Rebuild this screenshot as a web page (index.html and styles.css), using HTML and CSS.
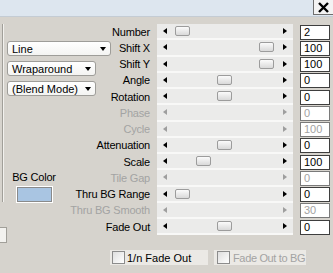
FILE: index.html
```html
<!DOCTYPE html>
<html lang="en">
<head>
    <meta charset="UTF-8">
    <title>Tile settings</title>
    <link rel="stylesheet" href="styles.css">
</head>
<body>
<div class="titlebar">
    <div class="close">
        <svg width="13" height="11" viewBox="0 0 13 11"><path d="M2 1 L11 10 M11 1 L2 10" stroke="#000" stroke-width="2.4" fill="none"/></svg>
    </div>
</div>

<div class="board">
    <!-- left column: mode drop downs and background colour -->
    <div class="side">
        <div class="pane">
            <div class="rule"></div>
            <div class="controls">
                <div class="combo wide"><span>Line</span><i class="caret"></i></div>
                <div class="combo"><span>Wraparound</span><i class="caret"></i></div>
                <div class="combo"><span>(Blend Mode)</span><i class="caret"></i></div>
                <div class="bgcolor">
                    <span>BG Color</span>
                    <div class="swatch"></div>
                </div>
            </div>
        </div>
        <div class="stub"></div>
    </div>

    <!-- slider rows -->
    <div class="rows">
        <div class="row">
            <label>Number</label>
            <div class="track"><i class="arr l"></i><b class="thumb" style="left: 18px"></b><i class="arr r"></i></div>
            <div class="val">2</div>
        </div>
        <div class="row">
            <label>Shift X</label>
            <div class="track"><i class="arr l"></i><b class="thumb" style="left: 102px"></b><i class="arr r"></i></div>
            <div class="val">100</div>
        </div>
        <div class="row">
            <label>Shift Y</label>
            <div class="track"><i class="arr l"></i><b class="thumb" style="left: 102px"></b><i class="arr r"></i></div>
            <div class="val">100</div>
        </div>
        <div class="row">
            <label>Angle</label>
            <div class="track"><i class="arr l"></i><b class="thumb" style="left: 60px"></b><i class="arr r"></i></div>
            <div class="val">0</div>
        </div>
        <div class="row">
            <label>Rotation</label>
            <div class="track"><i class="arr l"></i><b class="thumb" style="left: 60px"></b><i class="arr r"></i></div>
            <div class="val">0</div>
        </div>
        <div class="row off">
            <label>Phase</label>
            <div class="track"><i class="arr l"></i><i class="arr r"></i></div>
            <div class="val">0</div>
        </div>
        <div class="row off">
            <label>Cycle</label>
            <div class="track"><i class="arr l"></i><i class="arr r"></i></div>
            <div class="val">100</div>
        </div>
        <div class="row">
            <label>Attenuation</label>
            <div class="track"><i class="arr l"></i><b class="thumb" style="left: 60px"></b><i class="arr r"></i></div>
            <div class="val">0</div>
        </div>
        <div class="row">
            <label>Scale</label>
            <div class="track"><i class="arr l"></i><b class="thumb" style="left: 39px"></b><i class="arr r"></i></div>
            <div class="val">100</div>
        </div>
        <div class="row off">
            <label>Tile Gap</label>
            <div class="track"><i class="arr l"></i><i class="arr r"></i></div>
            <div class="val">0</div>
        </div>
        <div class="row">
            <label>Thru BG Range</label>
            <div class="track"><i class="arr l"></i><b class="thumb" style="left: 18px"></b><i class="arr r"></i></div>
            <div class="val">0</div>
        </div>
        <div class="row off">
            <label>Thru BG Smooth</label>
            <div class="track"><i class="arr l"></i><i class="arr r"></i></div>
            <div class="val">30</div>
        </div>
        <div class="row">
            <label>Fade Out</label>
            <div class="track"><i class="arr l"></i><b class="thumb" style="left: 60px"></b><i class="arr r"></i></div>
            <div class="val">0</div>
        </div>
    </div>
</div>

<div class="checks">
    <div class="check first"><i class="box"></i><span>1/n Fade Out</span></div>
    <div class="check second off"><i class="box"></i><span>Fade Out to BG</span></div>
</div>
</body>
</html>
```

FILE: styles.css
```css
body {
    margin: 0;
    background-color: #d6d3cd;
    font-family: "Liberation Sans", Arial, sans-serif;
    font-size: 11px;
    letter-spacing: -0.2px;
    color: #000;
}

.titlebar {
    height: 16px;
    background-color: #dde6ef;
    border-bottom: 1px solid #c4ccd4;
    display: flex;
    justify-content: flex-end;
}

.close {
    width: 19px;
    height: 14px;
    background-color: #f3f3f3;
    border-left: 1px solid #6f6f6f;
    border-bottom: 1px solid #6f6f6f;
    display: flex;
    align-items: center;
    justify-content: center;
}

.board {
    display: grid;
    padding-top: 7px;
}

.side,
.rows {
    grid-area: 1 / 1;
}

/* left column */
.side {
    display: flex;
    flex-direction: column;
}

.pane {
    display: flex;
    height: 178px;
}

.rule {
    margin-left: 2px;
    width: 1px;
    background-color: #a19f99;
    border-right: 1px solid #f2f1ee;
}

.controls {
    padding-left: 3px;
    padding-top: 17px;
    display: flex;
    flex-direction: column;
    align-items: flex-start;
    gap: 5px;
}

.combo {
    width: 89px;
    height: 20px;
    box-sizing: border-box;
    border: 1px solid #9e9d99;
    border-radius: 3px;
    background: linear-gradient(#ffffff, #f4f4f2);
    display: flex;
    align-items: center;
    justify-content: space-between;
    padding: 0 4px 0 4px;
    font-size: 11px;
    letter-spacing: 0;
}

.combo.wide {
    width: 104px;
}

.caret {
    width: 0;
    height: 0;
    border-left: 3.5px solid transparent;
    border-right: 3.5px solid transparent;
    border-top: 4px solid #000;
    margin-top: 1px;
}

.bgcolor {
    margin-top: 70px;
    margin-left: 2px;
    width: 50px;
    display: flex;
    flex-direction: column;
    align-items: center;
    gap: 3px;
    line-height: 13px;
}

.swatch {
    width: 33px;
    height: 13px;
    background-color: #a9c5e2;
    border: 1px solid #8a8a8a;
    box-shadow: 0 0 0 1px #ffffff;
}

.stub {
    margin-top: 25px;
    width: 6px;
    height: 14px;
    background-color: #f3f2ef;
    border: 1px solid #a19f99;
    border-left: none;
}

/* slider rows */
.rows {
    display: flex;
    flex-direction: column;
}

.row {
    height: 16.25px;
    display: grid;
    grid-template-columns: 150px 136px 30px;
    column-gap: 7px;
    align-items: center;
}

.row label {
    text-align: right;
    white-space: nowrap;
    line-height: 13px;
}

.track {
    position: relative;
    height: 100%;
    box-sizing: border-box;
    background-color: #ebebea;
    border-bottom: 2px solid #f8f8f7;
    display: flex;
    align-items: center;
    justify-content: space-between;
    padding: 0 6px 0 6px;
}

.arr {
    width: 0;
    height: 0;
    border-top: 3px solid transparent;
    border-bottom: 3px solid transparent;
}

.arr.l {
    border-right: 4px solid #000;
}

.arr.r {
    border-left: 4px solid #000;
}

.thumb {
    position: absolute;
    top: 2px;
    width: 15px;
    height: 10px;
    box-sizing: border-box;
    border: 1px solid #9c9c9c;
    border-radius: 2px;
    background: linear-gradient(#fbfbfb, #d9d9d9);
}

.val {
    height: 15px;
    box-sizing: border-box;
    border: 1px solid #3e3e3e;
    background-color: #fff;
    padding-left: 3px;
    line-height: 13px;
    letter-spacing: 0;
}

.off label,
.off .val,
.off span {
    color: #a3a3a3;
}

.off .val {
    border-color: #7a7a7a;
}

.off .arr.l {
    border-right-color: #9e9e9e;
}

.off .arr.r {
    border-left-color: #9e9e9e;
}

/* check boxes */
.checks {
    margin-top: 7px;
    padding-left: 110px;
    display: flex;
    gap: 6px;
}

.check {
    height: 15px;
    background-color: #ebe9e5;
    display: flex;
    align-items: center;
    gap: 2px;
    padding-left: 2px;
    white-space: nowrap;
    font-size: 11px;
}

.check.first {
    width: 96px;
    letter-spacing: 0;
}

.check.second {
    width: 89px;
    padding-left: 3px;
    gap: 3px;
    letter-spacing: -0.35px;
}

.box {
    flex: none;
    width: 13px;
    height: 13px;
    box-sizing: border-box;
    border: 1px solid #8c8c8c;
    background: linear-gradient(135deg, #dedede, #ffffff);
}
```
